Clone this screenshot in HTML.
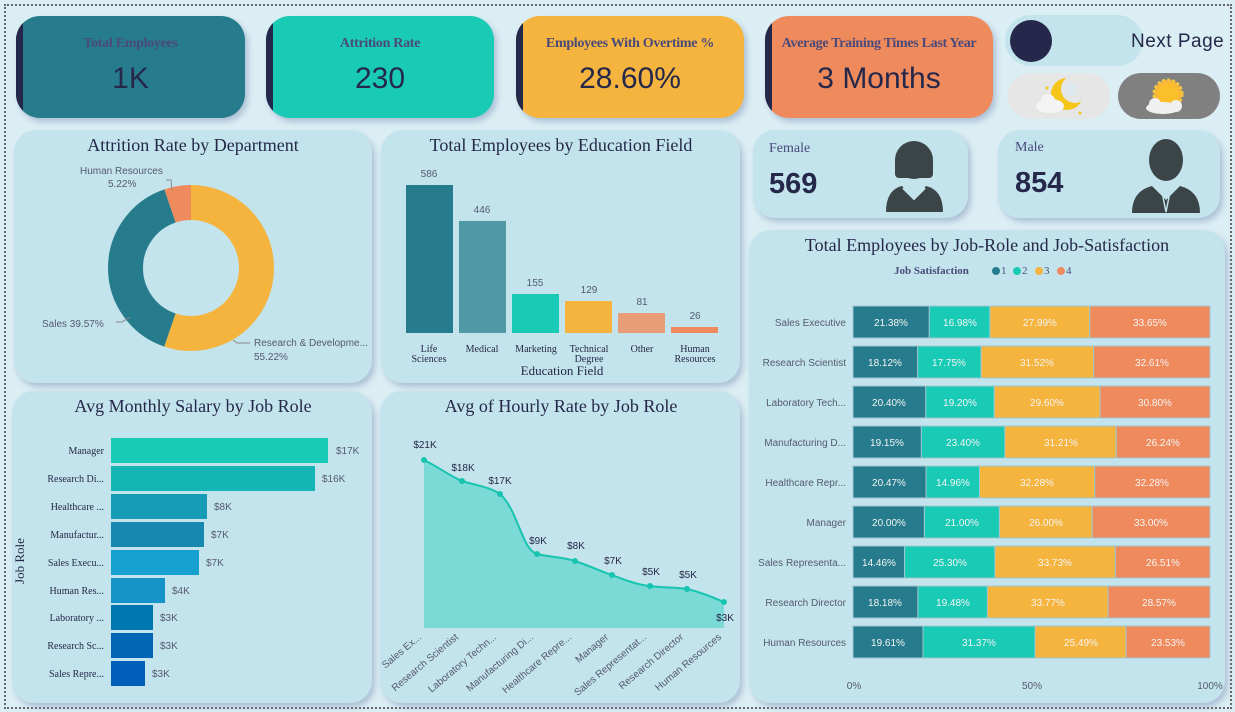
<!DOCTYPE html>
<html><head><meta charset="utf-8"><style>
*{margin:0;padding:0;box-sizing:border-box}
body{width:1235px;height:712px;background:#dbeef4;position:relative;overflow:hidden;font-family:"Liberation Sans",sans-serif}
.frame{position:absolute;left:4px;top:4px;width:1228px;height:705px;border:2px dotted #666}
.p{position:absolute;background:#c3e4ec;border-radius:22px;box-shadow:3px 4px 6px rgba(120,140,180,.45)}
.k{position:absolute;border-radius:24px;box-shadow:3px 4px 6px rgba(120,140,180,.45);overflow:hidden;text-align:center}
.k:before{content:"";position:absolute;left:0;top:0;bottom:0;width:7px;background:#25284a}
.k .t{font-family:"Liberation Serif",serif;font-weight:bold;font-size:14px;color:#4a4a7a;margin-top:20px;letter-spacing:-0.3px}
.k .v{font-size:30px;color:#25284a;margin-top:10px}
svg{position:absolute;left:0;top:0}
</style></head><body>
<div class="frame"></div>
<div class="k" style="left:16px;top:16px;width:229px;height:102px;background:#267c8c"><div class="t">Total Employees</div><div class="v">1K</div></div>
<div class="k" style="left:266px;top:16px;width:228px;height:102px;background:#19cab5"><div class="t">Attrition Rate</div><div class="v">230</div></div>
<div class="k" style="left:516px;top:16px;width:228px;height:102px;background:#f5b43e"><div class="t">Employees With Overtime %</div><div class="v">28.60%</div></div>
<div class="k" style="left:765px;top:16px;width:228px;height:102px;background:#ef8a5d"><div class="t">Average Training Times Last Year</div><div class="v">3 Months</div></div>
<div style="position:absolute;left:1005px;top:15px;width:138px;height:51px;border-radius:26px;background:#c3e4ec"></div>
<div style="position:absolute;left:1010px;top:20px;width:42px;height:42px;border-radius:50%;background:#25284a"></div>
<div style="position:absolute;left:1131px;top:31px;font-size:19px;color:#25284a;letter-spacing:0.5px">Next Page</div>
<div style="position:absolute;left:1008px;top:73px;width:102px;height:46px;border-radius:23px;background:#e6e6e6"></div>
<div style="position:absolute;left:1118px;top:73px;width:102px;height:46px;border-radius:23px;background:#808080"></div>
<div class="p" style="left:14px;top:130px;width:358px;height:253px"></div>
<div class="p" style="left:381px;top:130px;width:359px;height:253px"></div>
<div class="p" style="left:753px;top:130px;width:215px;height:88px"></div>
<div class="p" style="left:998px;top:130px;width:222px;height:88px"></div>
<div class="p" style="left:749px;top:230px;width:476px;height:473px"></div>
<div class="p" style="left:12px;top:391px;width:360px;height:312px"></div>
<div class="p" style="left:380px;top:391px;width:360px;height:312px"></div>

<svg width="1235" height="712" viewBox="0 0 1235 712" font-family="Liberation Sans, sans-serif">
<!-- weather icons -->
<g>
<circle cx="1067" cy="94" r="16" fill="#f5c518"/><circle cx="1075" cy="89" r="14" fill="#e6e6e6"/>
<circle cx="1071" cy="90" r="6" fill="#dde8ee"/>
<ellipse cx="1050" cy="106" rx="14" ry="7" fill="#f4f4f4"/><circle cx="1048" cy="101" r="7" fill="#f4f4f4"/>
<circle cx="1047" cy="88" r="1.5" fill="#f5c518"/><circle cx="1080" cy="113" r="1.5" fill="#f5c518"/>
<circle cx="1168" cy="94" r="14" fill="#f5b43e" stroke="#f7c63a" stroke-width="3" stroke-dasharray="3 2"/>
<circle cx="1168" cy="94" r="11" fill="#fbbf2a"/>
<ellipse cx="1163" cy="108" rx="17" ry="6" fill="#f0f0f0"/><circle cx="1155" cy="104" r="6" fill="#f0f0f0"/><circle cx="1176" cy="106" r="6" fill="#f0f0f0"/>
</g>
<!-- gender -->
<text x="769" y="152" font-family="Liberation Serif,serif" font-size="14" fill="#4a4a7a">Female</text>
<text x="769" y="193" font-size="29" font-weight="bold" fill="#25284a">569</text>
<text x="1015" y="151" font-family="Liberation Serif,serif" font-size="14" fill="#4a4a7a">Male</text>
<text x="1015" y="192" font-size="29" font-weight="bold" fill="#25284a">854</text>
<g fill="#3b4446">
<ellipse cx="914" cy="160" rx="19" ry="19"/><rect x="895" y="158" width="38" height="20" rx="4"/>
<path d="M886 212 Q886 190 902 186 L914 198 L926 186 Q943 190 943 212 Z"/>
<ellipse cx="1166" cy="160" rx="17" ry="21"/>
<path d="M1132 213 Q1132 191 1152 186 L1166 200 L1180 186 Q1200 191 1200 213 Z"/>
</g>
<path d="M903 188 L914 199 L925 188" stroke="#c3e4ec" stroke-width="2" fill="none"/>
<path d="M1162 192 L1166 212 L1170 192" stroke="#c3e4ec" stroke-width="1.5" fill="none"/>

<!-- Attrition donut -->
<text x="193" y="151" text-anchor="middle" font-family="Liberation Serif,serif" font-size="18" fill="#25284a">Attrition Rate by Department</text>
<g transform="rotate(-90 191 268)" fill="none" stroke-width="35">
<circle cx="191" cy="268" r="65.5" stroke="#f5b43e" stroke-dasharray="227.2 411.5"/>
<circle cx="191" cy="268" r="65.5" stroke="#267c8c" stroke-dasharray="0 227.2 162.8 411.5"/>
<circle cx="191" cy="268" r="65.5" stroke="#ef8a5d" stroke-dasharray="0 390 21.5 411.5"/>
</g>
<g font-size="10" fill="#555a70">
<text x="80" y="174">Human Resources</text><text x="108" y="187">5.22%</text>
<text x="42" y="327">Sales 39.57%</text>
<text x="254" y="346">Research &amp; Developme...</text><text x="254" y="360">55.22%</text>
</g>
<path d="M116 322 H122 L130 317 M166 180 H171 L172 190 M233 340 L237 343 H250" stroke="#888" fill="none"/>

<!-- Education -->
<text x="561" y="151" text-anchor="middle" font-family="Liberation Serif,serif" font-size="18" fill="#25284a">Total Employees by Education Field</text>
<rect x="406" y="185" width="47" height="148" fill="#267c8c"/>
<rect x="459" y="221" width="47" height="112" fill="#4f99a5"/>
<rect x="512" y="294" width="47" height="39" fill="#19cab5"/>
<rect x="565" y="301" width="47" height="32" fill="#f5b43e"/>
<rect x="618" y="313" width="47" height="20" fill="#e89c78"/>
<rect x="671" y="327" width="47" height="6" fill="#ef8a5d"/>
<g font-size="10" fill="#555a70" text-anchor="middle">
<text x="429" y="177">586</text><text x="482" y="213">446</text><text x="535" y="286">155</text><text x="589" y="293">129</text><text x="642" y="305">81</text><text x="695" y="319">26</text>
</g>
<g font-size="10" font-family="Liberation Serif,serif" fill="#25284a" text-anchor="middle">
<text x="429" y="352">Life</text><text x="429" y="362">Sciences</text>
<text x="482" y="352">Medical</text><text x="536" y="352">Marketing</text>
<text x="589" y="352">Technical</text><text x="589" y="362">Degree</text>
<text x="642" y="352">Other</text>
<text x="695" y="352">Human</text><text x="695" y="362">Resources</text>
<text x="562" y="375" font-size="13">Education Field</text>
</g>

<!-- Salary -->
<text x="193" y="412" text-anchor="middle" font-family="Liberation Serif,serif" font-size="18" fill="#25284a">Avg Monthly Salary by Job Role</text>
<text transform="translate(24 561) rotate(-90)" text-anchor="middle" font-family="Liberation Serif,serif" font-size="13" fill="#25284a">Job Role</text>
<g>
<rect x="111" y="438" width="217" height="25" fill="#17cbb5"/>
<rect x="111" y="466" width="204" height="25" fill="#16b5b5"/>
<rect x="111" y="494" width="96" height="25" fill="#179cb5"/>
<rect x="111" y="522" width="93" height="25" fill="#1789b0"/>
<rect x="111" y="550" width="88" height="25" fill="#16a0d0"/>
<rect x="111" y="578" width="54" height="25" fill="#1694c8"/>
<rect x="111" y="605" width="42" height="25" fill="#0077b0"/>
<rect x="111" y="633" width="42" height="25" fill="#0066b5"/>
<rect x="111" y="661" width="34" height="25" fill="#005fb8"/>
</g>
<g font-family="Liberation Serif,serif" font-size="10" fill="#25284a" text-anchor="end">
<text x="104" y="454">Manager</text><text x="104" y="482">Research Di...</text><text x="104" y="510">Healthcare ...</text><text x="104" y="538">Manufactur...</text><text x="104" y="566">Sales Execu...</text><text x="104" y="594">Human Res...</text><text x="104" y="621">Laboratory ...</text><text x="104" y="649">Research Sc...</text><text x="104" y="677">Sales Repre...</text>
</g>
<g font-size="10" fill="#555a70">
<text x="336" y="454">$17K</text><text x="322" y="482">$16K</text><text x="214" y="510">$8K</text><text x="211" y="538">$7K</text><text x="206" y="566">$7K</text><text x="172" y="594">$4K</text><text x="160" y="621">$3K</text><text x="160" y="649">$3K</text><text x="152" y="677">$3K</text>
</g>

<!-- Hourly -->
<text x="561" y="412" text-anchor="middle" font-family="Liberation Serif,serif" font-size="18" fill="#25284a">Avg of Hourly Rate by Job Role</text>
<path d="M424 460 C440 468 450 476 462 481 C478 486 490 487 500 494 C518 510 522 550 537 554 C550 557 562 557 575 561 C590 566 600 571 612 575 C625 580 638 585 650 586 C665 588 675 587 687 589 C700 592 712 597 724 602 L724 628 L424 628 Z" fill="#7bd9d6"/>
<path d="M424 460 C440 468 450 476 462 481 C478 486 490 487 500 494 C518 510 522 550 537 554 C550 557 562 557 575 561 C590 566 600 571 612 575 C625 580 638 585 650 586 C665 588 675 587 687 589 C700 592 712 597 724 602" fill="none" stroke="#17c4b0" stroke-width="2"/>
<g fill="#17c4b0"><circle cx="424" cy="460" r="3"/><circle cx="462" cy="481" r="3"/><circle cx="500" cy="494" r="3"/><circle cx="537" cy="554" r="3"/><circle cx="575" cy="561" r="3"/><circle cx="612" cy="575" r="3"/><circle cx="650" cy="586" r="3"/><circle cx="687" cy="589" r="3"/><circle cx="724" cy="602" r="3"/></g>
<g font-size="10" fill="#25284a" text-anchor="middle">
<text x="425" y="448">$21K</text><text x="463" y="471">$18K</text><text x="500" y="484">$17K</text><text x="538" y="544">$9K</text><text x="576" y="549">$8K</text><text x="613" y="564">$7K</text><text x="651" y="575">$5K</text><text x="688" y="578">$5K</text><text x="725" y="621">$3K</text>
</g>
<g font-size="10" fill="#555a70" text-anchor="end">
<text transform="translate(422 638) rotate(-40)">Sales Ex...</text>
<text transform="translate(459 638) rotate(-40)">Research Scientist</text>
<text transform="translate(497 638) rotate(-40)">Laboratory Techn...</text>
<text transform="translate(534 638) rotate(-40)">Manufacturing Di...</text>
<text transform="translate(572 638) rotate(-40)">Healthcare Repre...</text>
<text transform="translate(609 638) rotate(-40)">Manager</text>
<text transform="translate(647 638) rotate(-40)">Sales Representat...</text>
<text transform="translate(684 638) rotate(-40)">Research Director</text>
<text transform="translate(722 638) rotate(-40)">Human Resources</text>
</g>

<!-- Job role stacked -->
<text x="987" y="251" text-anchor="middle" font-family="Liberation Serif,serif" font-size="18" fill="#25284a">Total Employees by Job-Role and Job-Satisfaction</text>
<text x="894" y="274" font-family="Liberation Serif,serif" font-weight="bold" font-size="11" fill="#4a4a7a">Job Satisfaction</text>
<g font-family="Liberation Serif,serif" font-size="11" fill="#4a4a7a">
<circle cx="996" cy="271" r="4" fill="#267c8c"/><text x="1001" y="274">1</text>
<circle cx="1017" cy="271" r="4" fill="#19cab5"/><text x="1022" y="274">2</text>
<circle cx="1039" cy="271" r="4" fill="#f5b43e"/><text x="1044" y="274">3</text>
<circle cx="1061" cy="271" r="4" fill="#ef8a5d"/><text x="1066" y="274">4</text>
</g>
<g stroke="#9fc7d2" stroke-width="1">
<g transform="translate(0 306)"><rect x="853" width="76.3" height="32" fill="#267c8c"/><rect x="929.3" width="60.6" height="32" fill="#19cab5"/><rect x="989.9" width="99.9" height="32" fill="#f5b43e"/><rect x="1089.8" width="120.2" height="32" fill="#ef8a5d"/></g>
<g transform="translate(0 346)"><rect x="853" width="64.7" height="32" fill="#267c8c"/><rect x="917.7" width="63.4" height="32" fill="#19cab5"/><rect x="981.1" width="112.5" height="32" fill="#f5b43e"/><rect x="1093.6" width="116.4" height="32" fill="#ef8a5d"/></g>
<g transform="translate(0 386)"><rect x="853" width="72.8" height="32" fill="#267c8c"/><rect x="925.8" width="68.5" height="32" fill="#19cab5"/><rect x="994.3" width="105.7" height="32" fill="#f5b43e"/><rect x="1100" width="110" height="32" fill="#ef8a5d"/></g>
<g transform="translate(0 426)"><rect x="853" width="68.4" height="32" fill="#267c8c"/><rect x="921.4" width="83.5" height="32" fill="#19cab5"/><rect x="1004.9" width="111.4" height="32" fill="#f5b43e"/><rect x="1116.3" width="93.7" height="32" fill="#ef8a5d"/></g>
<g transform="translate(0 466)"><rect x="853" width="73.1" height="32" fill="#267c8c"/><rect x="926.1" width="53.4" height="32" fill="#19cab5"/><rect x="979.5" width="115.2" height="32" fill="#f5b43e"/><rect x="1094.7" width="115.3" height="32" fill="#ef8a5d"/></g>
<g transform="translate(0 506)"><rect x="853" width="71.4" height="32" fill="#267c8c"/><rect x="924.4" width="75" height="32" fill="#19cab5"/><rect x="999.4" width="92.8" height="32" fill="#f5b43e"/><rect x="1092.2" width="117.8" height="32" fill="#ef8a5d"/></g>
<g transform="translate(0 546)"><rect x="853" width="51.6" height="32" fill="#267c8c"/><rect x="904.6" width="90.3" height="32" fill="#19cab5"/><rect x="994.9" width="120.4" height="32" fill="#f5b43e"/><rect x="1115.3" width="94.7" height="32" fill="#ef8a5d"/></g>
<g transform="translate(0 586)"><rect x="853" width="64.9" height="32" fill="#267c8c"/><rect x="917.9" width="69.5" height="32" fill="#19cab5"/><rect x="987.4" width="120.6" height="32" fill="#f5b43e"/><rect x="1108" width="102" height="32" fill="#ef8a5d"/></g>
<g transform="translate(0 626)"><rect x="853" width="70" height="32" fill="#267c8c"/><rect x="923" width="112" height="32" fill="#19cab5"/><rect x="1035" width="91" height="32" fill="#f5b43e"/><rect x="1126" width="84" height="32" fill="#ef8a5d"/></g>
</g>
<g font-size="10" fill="#f4f4f4" text-anchor="middle">
<text x="891" y="326">21.38%</text><text x="960" y="326">16.98%</text><text x="1040" y="326">27.99%</text><text x="1150" y="326">33.65%</text>
<text x="885" y="366">18.12%</text><text x="949" y="366">17.75%</text><text x="1037" y="366">31.52%</text><text x="1152" y="366">32.61%</text>
<text x="889" y="406">20.40%</text><text x="960" y="406">19.20%</text><text x="1047" y="406">29.60%</text><text x="1155" y="406">30.80%</text>
<text x="887" y="446">19.15%</text><text x="963" y="446">23.40%</text><text x="1061" y="446">31.21%</text><text x="1163" y="446">26.24%</text>
<text x="889" y="486">20.47%</text><text x="953" y="486">14.96%</text><text x="1037" y="486">32.28%</text><text x="1152" y="486">32.28%</text>
<text x="889" y="526">20.00%</text><text x="962" y="526">21.00%</text><text x="1046" y="526">26.00%</text><text x="1151" y="526">33.00%</text>
<text x="879" y="566">14.46%</text><text x="950" y="566">25.30%</text><text x="1055" y="566">33.73%</text><text x="1163" y="566">26.51%</text>
<text x="885" y="606">18.18%</text><text x="953" y="606">19.48%</text><text x="1048" y="606">33.77%</text><text x="1159" y="606">28.57%</text>
<text x="888" y="646">19.61%</text><text x="979" y="646">31.37%</text><text x="1081" y="646">25.49%</text><text x="1168" y="646">23.53%</text>
</g>
<g font-size="10" fill="#555a70" text-anchor="end">
<text x="846" y="326">Sales Executive</text><text x="846" y="366">Research Scientist</text><text x="846" y="406">Laboratory Tech...</text><text x="846" y="446">Manufacturing D...</text><text x="846" y="486">Healthcare Repr...</text><text x="846" y="526">Manager</text><text x="846" y="566">Sales Representa...</text><text x="846" y="606">Research Director</text><text x="846" y="646">Human Resources</text>
</g>
<g font-size="10" fill="#555a70" text-anchor="middle">
<text x="854" y="689">0%</text><text x="1032" y="689">50%</text><text x="1210" y="689">100%</text>
</g>
</svg>
</body></html>
